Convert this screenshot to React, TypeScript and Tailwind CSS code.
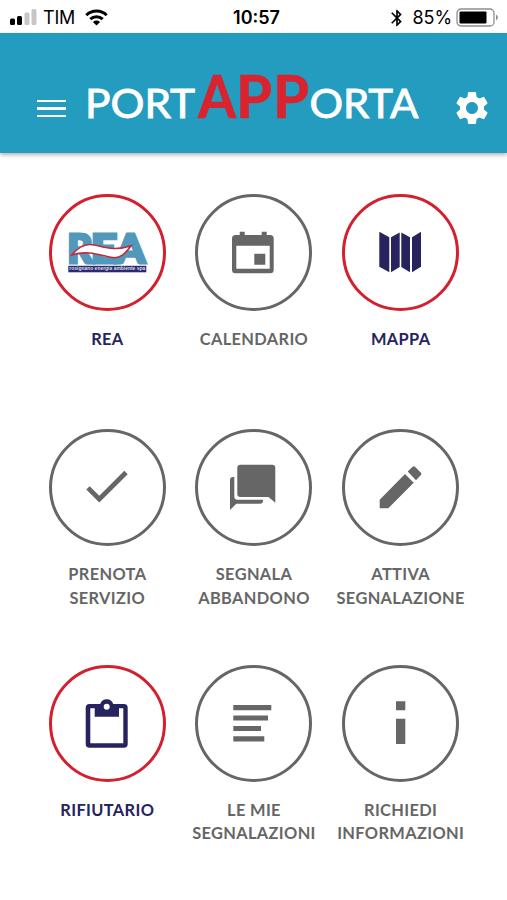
import React, { FC, ReactNode } from 'react';

import { clsx } from 'clsx';
import { MdBluetooth, MdSettings } from 'react-icons/md';

type Tile = {
  id: string;
  label: ReactNode;
  icon: ReactNode;
  active?: boolean;
};

const ReaLogo: FC = () => (
  <>
    <text
      y="69"
      fill="#5199bb"
      stroke="#5199bb"
      strokeWidth="3.2"
      fontFamily="Lato, sans-serif"
      fontWeight="900"
      fontSize="39"
    >
      <tspan x="18.5" textLength="25" lengthAdjust="spacingAndGlyphs">
        R
      </tspan>
      <tspan x="42" textLength="26" lengthAdjust="spacingAndGlyphs">
        E
      </tspan>
      <tspan x="67" textLength="29" lengthAdjust="spacingAndGlyphs">
        A
      </tspan>
    </text>
    <path
      d="M22.7 61C29 53.5 34 50.3 41 50.5C52 51 62 58.5 82 51.7C76 60 71 64.5 64 63.6C53 62 40 55.5 22.7 61Z"
      fill="#fff"
      stroke="#c22a3c"
      strokeWidth="1.6"
    />
    <rect x="19.3" y="71.8" width="78" height="6.5" fill="#2b2a6b" />
    <text
      x="20.3"
      y="76.4"
      textLength="76"
      lengthAdjust="spacingAndGlyphs"
      fill="#dcdcec"
      fontFamily="Liberation Sans, sans-serif"
      fontWeight="700"
      fontSize="5.6"
    >
      rosignano energia ambiente spa
    </text>
  </>
);

const TILES: Tile[] = [
  { id: 'rea', label: 'REA', icon: <ReaLogo />, active: true },
  {
    id: 'calendario',
    label: 'CALENDARIO',
    icon: (
      <path
        fillRule="evenodd"
        d="M44.7 37.7h5V41h17v-3.3h5V41h3.5a3.5 3.5 0 0 1 3.5 3.5v31.3a3.5 3.5 0 0 1-3.5 3.5H40.5a3.5 3.5 0 0 1-3.5-3.5V44.5a3.5 3.5 0 0 1 3.5-3.5h4.2zM41.3 51.7v23h33.4v-23zM59.3 59.7h11v11h-11z"
      />
    ),
  },
  {
    id: 'mappa',
    label: 'MAPPA',
    active: true,
    icon: (
      <path d="M37.3 37.7l10 5.6v35l-10-5.6zM49 43.3l8.7-4.9v34.5l-8.7 5.4zM59.3 38.4l8.7 4.9v35l-8.7-5.4zM70 43.3l9-5.6v35l-9 5.6z" />
    ),
  },
  {
    id: 'prenota',
    label: (
      <>
        PRENOTA
        <br />
        SERVIZIO
      </>
    ),
    icon: <path d="M37.3 60.6l3.4-3.4 9.6 9.6 25-25 3.4 3.4-28.4 28.4z" />,
  },
  {
    id: 'segnala',
    label: (
      <>
        SEGNALA
        <br />
        ABBANDONO
      </>
    ),
    icon: (
      <path d="M45.5 35.7h31.6a3.2 3.2 0 0 1 3.2 3.2v34.8L73.5 68h-28a3.2 3.2 0 0 1-3.2-3.2V38.9a3.2 3.2 0 0 1 3.2-3.2zM39.3 48v19.5a3.2 3.2 0 0 0 3.2 3.2H68v.8a3.2 3.2 0 0 1-3.2 3.2H41.3L35 81V51.2A3.2 3.2 0 0 1 38.2 48z" />
    ),
  },
  {
    id: 'attiva',
    label: (
      <>
        ATTIVA
        <br />
        SEGNALAZIONE
      </>
    ),
    icon: (
      <path d="M37.7 70.8v8.5h8.6l25.4-25.6-8.7-8.6zM65.7 42.6l4.9-4.8q1.2-1.1 2.4 0l5.9 5.9q1.2 1.2 0 2.4l-4.9 5.1z" />
    ),
  },
  {
    id: 'rifiutario',
    label: 'RIFIUTARIO',
    active: true,
    icon: (
      <path
        fillRule="evenodd"
        d="M40.5 39h10.7a6.8 6.8 0 0 1 13 0h10.7a3.8 3.8 0 0 1 3.8 3.8v36.1a3.8 3.8 0 0 1-3.8 3.8H40.5a3.8 3.8 0 0 1-3.8-3.8V42.8A3.8 3.8 0 0 1 40.5 39zM41.3 43.3v35h33v-35H70v8.4H45.7v-8.4zM54.7 41.7a3 3 0 1 0 6 0a3 3 0 1 0-6 0z"
      />
    ),
  },
  {
    id: 'mie',
    label: (
      <>
        LE MIE
        <br />
        SEGNALAZIONI
      </>
    ),
    icon: (
      <path d="M38.3 40h38v5.2h-38zM38.3 50.4H73v5.2H38.3zM38.3 60.9H66v5.2H38.3zM38.3 71.3h31v5.2h-31z" />
    ),
  },
  {
    id: 'richiedi',
    label: (
      <>
        RICHIEDI
        <br />
        INFORMAZIONI
      </>
    ),
    icon: <path d="M54 36.2h9.3v9H54zM54 53.8h9.3V79H54z" />,
  },
];

const StatusBar: FC = () => (
  <div className="grid h-[33px] grid-cols-3 items-center bg-white pt-0.5 font-[Inter,sans-serif] text-[18px] text-black">
    <div className="flex items-center pl-2.5">
      <svg width="27" height="17" viewBox="0 0 27 17">
        <rect y="9.5" width="5" height="6.5" rx="1.5" />
        <rect x="7" y="7" width="5" height="9" rx="1.5" />
        <rect x="14.5" y="3.5" width="5" height="12.5" rx="1.5" fill="#c6c6c6" />
        <rect x="21.5" width="5" height="16" rx="1.5" fill="#c6c6c6" />
      </svg>
      <span className="ml-1.5 w-8 tracking-[-0.2px]">TIM</span>
      <svg className="ml-2.5" width="23" height="17" viewBox="0 0 23 17">
        <g fill="none" stroke="#000" strokeWidth="3">
          <path d="M1.3 6.3a14.5 14.5 0 0 1 20.4 0" />
          <path d="M5.3 10.2a8.9 8.9 0 0 1 12.4 0" />
        </g>
        <path d="M11.5 16.5l-3.6-3.6a5.2 5.2 0 0 1 7.2 0z" />
      </svg>
    </div>
    <div className="pl-1.5 text-center font-semibold">10:57</div>
    <div className="flex items-center justify-end pr-2">
      <MdBluetooth size={20} />
      <span className="ml-1.5 tracking-[-0.1px]">85%</span>
      <svg className="ml-1" width="43" height="19" viewBox="0 0 43 19">
        <rect x="1" y="1" width="37" height="17" rx="4" fill="#fff" stroke="#8f8f8f" strokeWidth="1.3" />
        <rect x="3.5" y="3.5" width="27" height="12" rx="1" />
        <path d="M40 6.5q4 3 0 6z" fill="#8f8f8f" />
      </svg>
    </div>
  </div>
);

const Header: FC = () => (
  <header className="flex h-[120px] items-start bg-[#239cbf] pl-[37px] text-white shadow-[0_2px_4px_rgba(0,0,0,0.3)]">
    <button className="mt-[67px] flex w-[29px] flex-col gap-[5px]" aria-label="Menu">
      <span className="h-[2.3px] w-full bg-white" />
      <span className="h-[2.3px] w-full bg-white" />
      <span className="h-[2.3px] w-full bg-white" />
    </button>
    <svg
      className="mt-[20px] ml-4"
      width="346"
      height="84"
      viewBox="0 0 346 84"
      fontFamily="Lato, sans-serif"
      fill="#fff"
    >
      <text x="3" y="65" fontSize="41" stroke="#fff" strokeWidth="0.9" textLength="110" lengthAdjust="spacingAndGlyphs">
        PORT
      </text>
      <text y="65" fontSize="60" fontWeight="700" fill="#d9232e" stroke="#d9232e" strokeWidth="0.6">
        <tspan x="116" textLength="38" lengthAdjust="spacingAndGlyphs">
          A
        </tspan>
        <tspan x="154" textLength="36" lengthAdjust="spacingAndGlyphs">
          P
        </tspan>
        <tspan x="191" textLength="36" lengthAdjust="spacingAndGlyphs">
          P
        </tspan>
      </text>
      <text x="227.5" y="65" fontSize="41" stroke="#fff" strokeWidth="0.9" textLength="109" lengthAdjust="spacingAndGlyphs">
        ORTA
      </text>
    </svg>
    <button className="mt-[55px] ml-[23.5px]" aria-label="Impostazioni">
      <MdSettings size={40} />
    </button>
  </header>
);

const MenuTile: FC<{ tile: Tile }> = ({ tile }) => (
  <button
    className={clsx(
      'flex flex-col items-center',
      tile.active ? 'text-[#27235f]' : 'text-[#666666]',
    )}
  >
    <span
      className={clsx(
        'size-[117px] rounded-full border-3',
        tile.active ? 'border-[#d2202f]' : 'border-[#666666]',
      )}
    >
      <svg className="-m-[3px] size-[117px]" viewBox="0 0 117 117" fill="currentColor">
        {tile.icon}
      </svg>
    </span>
    <span className="mt-4 text-center text-[16.4px] leading-[23.5px] font-bold tracking-[0.35px] whitespace-nowrap">
      {tile.label}
    </span>
  </button>
);

export default function App() {
  return (
    <div className="h-[900px] w-[507px] overflow-hidden bg-white font-[Lato,sans-serif]">
      <StatusBar />
      <Header />
      <main className="grid auto-rows-[235.5px] grid-cols-3 items-start pt-[40.6px] pr-[33px] pl-[34px]">
        {TILES.map(tile => (
          <MenuTile key={tile.id} tile={tile} />
        ))}
      </main>
    </div>
  );
}
